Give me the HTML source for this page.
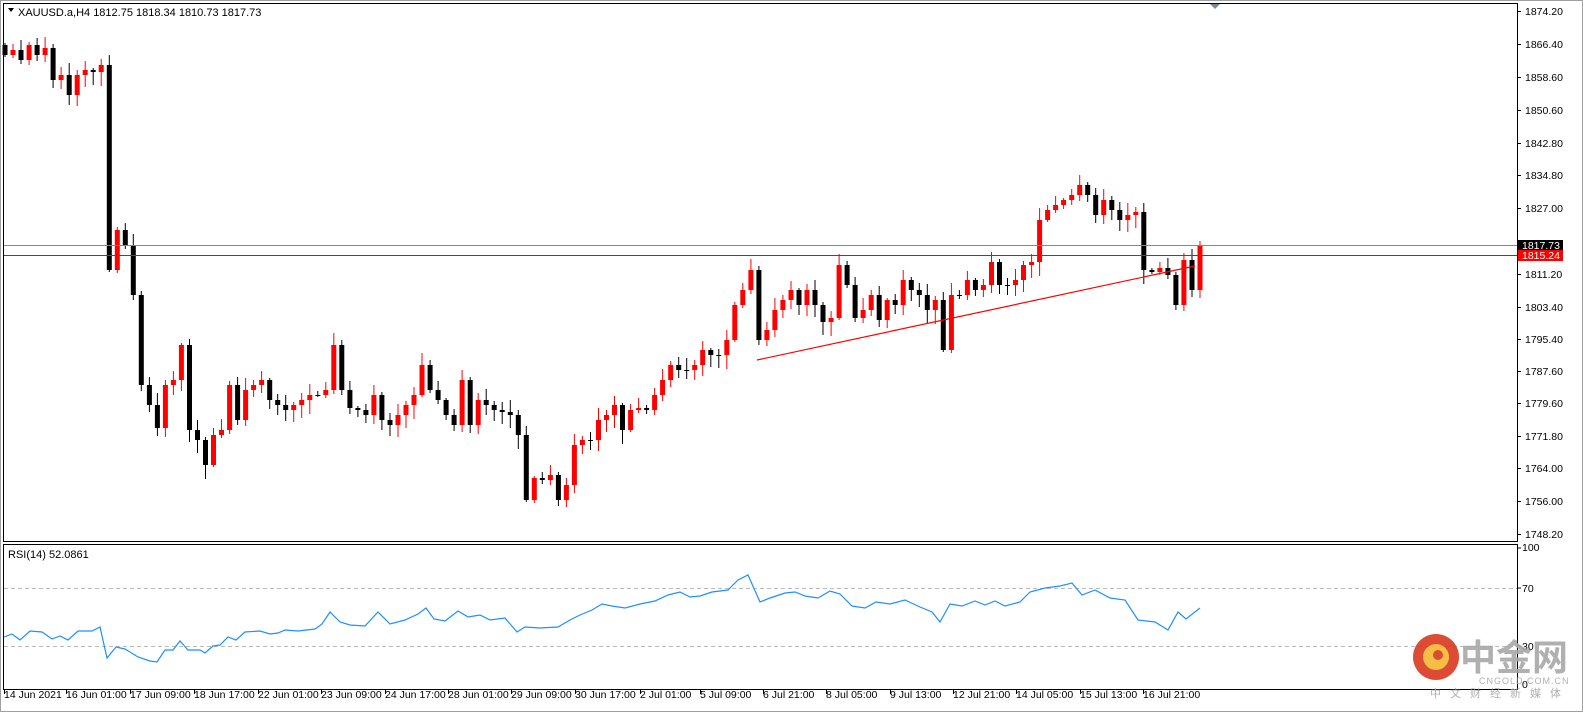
<!DOCTYPE html>
<html><head><meta charset="utf-8"><style>
html,body{margin:0;padding:0;background:#fff;}
body{width:1583px;height:713px;overflow:hidden;position:relative;font-family:"Liberation Sans","Noto Sans CJK SC",sans-serif;}
svg{position:absolute;left:0;top:0;}
text{font-family:"Liberation Sans","Noto Sans CJK SC",sans-serif;}
</style></head><body>
<svg id="s" width="1583" height="713" xmlns="http://www.w3.org/2000/svg">
<rect x="0.5" y="0.5" width="1582" height="711" fill="#fff" stroke="#a0a0a0"/>
<rect x="3.5" y="3.5" width="1514" height="538" fill="none" stroke="#000"/>
<rect x="3.5" y="544.5" width="1514" height="145" fill="none" stroke="#000"/>
<polygon points="1210,4 1220,4 1215,9" fill="#7a8a99"/>
<line x1="4" y1="588.5" x2="1517" y2="588.5" stroke="#bbb" stroke-dasharray="4,3"/>
<line x1="4" y1="646.5" x2="1517" y2="646.5" stroke="#bbb" stroke-dasharray="4,3"/>
<g id="c"></g>
<line x1="4" y1="245.5" x2="1517" y2="245.5" stroke="#7a8a99"/>
<line x1="4" y1="255.5" x2="1517" y2="255.5" stroke="#f00"/>
<line x1="757" y1="360" x2="1195" y2="266" stroke="#f00" stroke-width="1.2"/>
<polyline id="rsi" fill="none" stroke="#1e90ff" stroke-width="1.2" points=""/>
<polygon points="8,8 14,8 11,12" fill="#000"/>
<text x="18" y="16" font-size="11" fill="#000">XAUUSD.a,H4  1812.75 1818.34 1810.73 1817.73</text>
<text x="8" y="558" font-size="11" fill="#000">RSI(14) 52.0861</text>
<g id="ax" font-size="10.5" fill="#000"></g>
<rect x="1518" y="240" width="45" height="11" fill="#000"/>
<text x="1522" y="249" font-size="10.5" fill="#fff">1817.73</text>
<rect x="1518" y="250" width="45" height="11" fill="#f00"/>
<text x="1522" y="259" font-size="10.5" fill="#fff">1815.24</text>
<text x="1522" y="551" font-size="10.5" fill="#000">100</text>
<text x="1522" y="592" font-size="10.5" fill="#000">70</text>
<text x="1522" y="650" font-size="10.5" fill="#000">30</text>
<text x="1522" y="688" font-size="10.5" fill="#000">0</text>
<line x1="1517" y1="548" x2="1521" y2="548" stroke="#000"/>
<line x1="1517" y1="588" x2="1521" y2="588" stroke="#000"/>
<line x1="1517" y1="646" x2="1521" y2="646" stroke="#000"/>
<g opacity="0.9">
<circle cx="1436" cy="657" r="23" fill="#d9381e"/>
<circle cx="1436" cy="657" r="13" fill="#f7b733"/>
<circle cx="1438" cy="655" r="5" fill="#d9381e"/>
<text x="1460" y="670" font-size="36" font-weight="bold" fill="#a8a8a8" font-family="Noto Sans CJK SC,sans-serif">中金网</text>
<text x="1479" y="684" font-size="9" fill="#a8a8a8" letter-spacing="1">CNGOLD.COM.CN</text>
<text x="1430" y="697" font-size="11" fill="#a8a8a8" letter-spacing="9" font-family="Noto Sans CJK SC,sans-serif">中文财经新媒体</text>
</g>
<g id="tx" font-size="10.5" fill="#000"></g>
</svg>
<script>
(function(){
var NS="http://www.w3.org/2000/svg";
function el(t,a,p,txt){var e=document.createElementNS(NS,t);for(var k in a)e.setAttribute(k,a[k]);if(txt)e.textContent=txt;p.appendChild(e);return e;}
var C=[55,50,60,45,55,48,80,75,95,75,70,72,65,270,230,245,295,385,405,428,385,380,345,430,440,465,435,430,385,420,390,385,380,400,405,410,405,400,395,395,390,345,390,408,410,415,395,420,425,415,405,395,365,390,400,415,425,380,425,400,405,410,412,415,435,500,478,480,475,500,485,445,440,440,420,415,405,430,410,408,410,395,380,365,370,370,365,350,355,355,340,305,290,270,340,330,310,300,290,305,290,305,322,318,265,285,318,310,295,320,300,305,280,290,295,310,300,350,295,295,280,290,285,262,285,285,280,265,262,220,210,205,200,195,185,195,215,200,210,220,215,212,270,272,268,275,305,260,290,245];
var g=document.getElementById('c');var prev=45;
for(var i=0;i<C.length;i++){var x=5+i*8.02,o=prev,c=C[i];var hi=Math.min(o,c),lo=Math.max(o,c);
var r1=((i*37)%11)+2,r2=((i*53)%13)+2;var col=c<o?'#f00':'#000';
el('line',{x1:x.toFixed(1),y1:hi-r1,x2:x.toFixed(1),y2:lo+r2,stroke:col,'stroke-width':1},g);
el('rect',{x:(x-2.5).toFixed(1),y:hi,width:5,height:Math.max(1,lo-hi),fill:col},g);prev=c;}
var R=[[4,637],[12,634],[20,640],[30,631],[42,632],[52,639],[60,636],[68,640],[78,631],[92,631],[100,627],[107,658],[116,647],[125,649],[138,657],[150,661],[157,662],[165,650],[173,650],[180,641],[188,650],[200,650],[205,653],[213,646],[220,645],[228,637],[236,640],[245,632],[260,631],[270,634],[278,633],[285,630],[298,631],[315,629],[322,624],[330,612],[340,622],[350,625],[365,626],[378,612],[390,624],[405,620],[418,614],[426,608],[434,619],[445,621],[458,611],[468,617],[480,615],[490,620],[505,618],[517,632],[525,627],[540,628],[558,627],[570,620],[580,615],[592,610],[602,604],[612,606],[625,608],[640,604],[655,601],[668,595],[680,592],[690,597],[700,596],[712,592],[728,590],[738,580],[748,575],[760,602],[770,598],[785,593],[795,592],[805,596],[818,598],[830,591],[840,594],[852,606],[865,608],[876,602],[890,604],[905,600],[920,607],[932,612],[940,622],[950,604],[962,606],[975,601],[985,605],[995,601],[1005,606],[1020,602],[1030,592],[1045,588],[1060,586],[1072,583],[1082,595],[1095,590],[1110,598],[1125,600],[1138,620],[1155,622],[1168,630],[1178,612],[1186,619],[1200,608]];
document.getElementById('rsi').setAttribute('points',R.map(function(p){return p.join(',')}).join(' '));
var ax=document.getElementById('ax');
var L=[["1874.20",11],["1866.40",44],["1858.60",77],["1850.60",110],["1842.80",143],["1834.80",175],["1827.00",208],["1819.00",241],["1811.20",274],["1803.40",307],["1795.40",339],["1787.60",371],["1779.60",403],["1771.80",436],["1764.00",468],["1756.00",501],["1748.20",534]];
L.forEach(function(l){if(l[0]!="1819.00")el('text',{x:1525,y:l[1]+4},ax,l[0]);el('line',{x1:1517,y1:l[1]+.5,x2:1521,y2:l[1]+.5,stroke:'#000'},ax);});
var T=[["14 Jun 2021",4],["16 Jun 01:00",66],["17 Jun 09:00",130],["18 Jun 17:00",194],["22 Jun 01:00",258],["23 Jun 09:00",321],["24 Jun 17:00",385],["28 Jun 01:00",448],["29 Jun 09:00",511],["30 Jun 17:00",575],["2 Jul 01:00",640],["5 Jul 09:00",700],["6 Jul 21:00",763],["8 Jul 05:00",826],["9 Jul 13:00",890],["12 Jul 21:00",953],["14 Jul 05:00",1016],["15 Jul 13:00",1080],["16 Jul 21:00",1143]];
var tx=document.getElementById('tx');
T.forEach(function(t){el('text',{x:t[1],y:698},tx,t[0]);el('line',{x1:t[1]+.5,y1:690,x2:t[1]+.5,y2:694,stroke:'#000'},tx);});
})();
</script>
</body></html>
